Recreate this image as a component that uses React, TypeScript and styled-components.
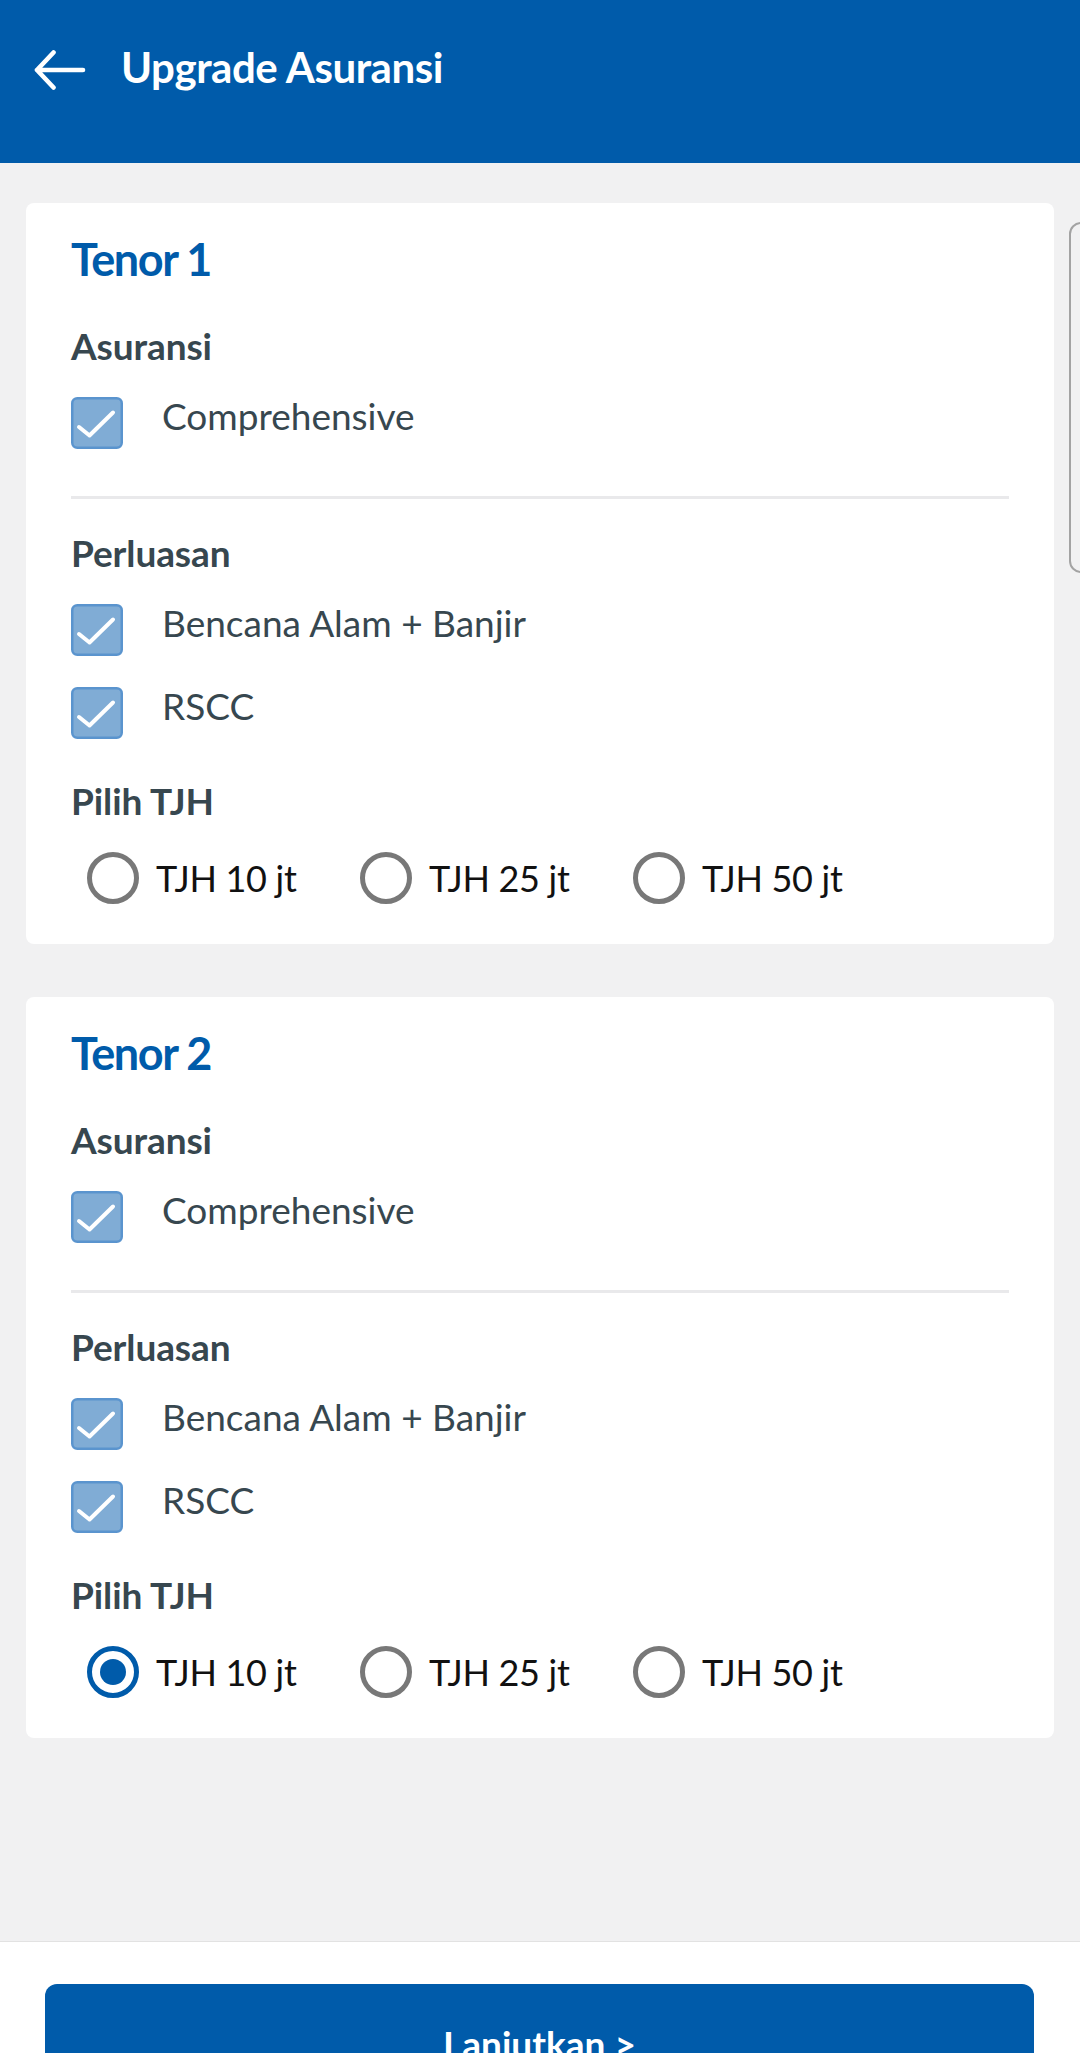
import React from "react";
import styled, { createGlobalStyle } from "styled-components";

const GlobalStyle = createGlobalStyle`
  html, body {
    margin: 0;
    padding: 0;
    background: #f1f1f2;
  }
  * { box-sizing: border-box; }
  body {
    font-family: Lato, "Noto Sans", "Liberation Sans", sans-serif;
  }
`;

const Screen = styled.div`
  position: relative;
  width: 1080px;
  height: 2053px;
  display: flex;
  flex-direction: column;
  overflow: hidden;
  background: #f1f1f2;
`;

const Header = styled.header`
  flex-shrink: 0;
  height: 163px;
  background: #005baa;
  display: flex;
  align-items: flex-start;
  padding: 45px 0 0 34px;
  gap: 35px;
`;

const BackButton = styled.button`
  margin-top: 4px;
  padding: 0;
  border: 0;
  background: transparent;
  width: 52px;
  height: 42px;
  display: flex;
  cursor: pointer;
`;

const HeaderTitle = styled.h1`
  margin: 0;
  color: #ffffff;
  font-size: 42px;
  line-height: 44px;
  font-weight: 700;
  letter-spacing: -0.45px;
`;

const Content = styled.main`
  flex: 1;
  display: flex;
  flex-direction: column;
  gap: 53px;
  padding: 40px 26px 0;
`;

const Card = styled.section`
  background: #ffffff;
  border-radius: 8px;
  padding: 28px 45px 40px;
  display: flex;
  flex-direction: column;
`;

const CardTitle = styled.h2`
  margin: 0;
  color: #005baa;
  font-size: 45px;
  line-height: 56px;
  font-weight: 700;
  letter-spacing: -1.4px;
`;

const SectionLabel = styled.h3<{ $top: number }>`
  margin: ${(p) => p.$top}px 0 29px;
  color: #37474f;
  font-size: 37px;
  line-height: 44px;
  font-weight: 700;
  letter-spacing: -0.1px;
`;

const CheckList = styled.div`
  display: flex;
  flex-direction: column;
  gap: 31px;
`;

const CheckRow = styled.label`
  display: flex;
  align-items: flex-start;
  gap: 39px;
  height: 52px;
`;

const CheckLabel = styled.span`
  color: #37474f;
  font-size: 37px;
  line-height: 38px;
  font-weight: 400;
`;

const Divider = styled.hr`
  margin: 47px 0 0;
  border: 0;
  height: 3px;
  background: #e9e9eb;
`;

const RadioGroup = styled.div`
  display: grid;
  grid-template-columns: repeat(3, 273px);
`;

const RadioItem = styled.label`
  display: flex;
  align-items: center;
  gap: 17px;
  padding-left: 16px;
  height: 52px;
`;

const RadioCircle = styled.span<{ $checked: boolean }>`
  flex-shrink: 0;
  width: 52px;
  height: 52px;
  border-radius: 50%;
  border: 5px solid ${(p) => (p.$checked ? "#005baa" : "#787878")};
  display: flex;
  align-items: center;
  justify-content: center;
  &::after {
    content: "";
    display: ${(p) => (p.$checked ? "block" : "none")};
    width: 26px;
    height: 26px;
    border-radius: 50%;
    background: #005baa;
  }
`;

const RadioLabel = styled.span`
  color: #111111;
  font-size: 36px;
  line-height: 48px;
  font-weight: 400;
  letter-spacing: -0.3px;
`;

const SideTab = styled.div`
  position: absolute;
  left: 1069px;
  top: 222px;
  width: 40px;
  height: 351px;
  border: 2px solid #a3a3a3;
  border-radius: 12px;
`;

const BottomBar = styled.footer`
  flex-shrink: 0;
  height: 112px;
  background: #ffffff;
  border-top: 1px solid #e2e2e2;
  padding: 42px 46px 0 45px;
  overflow: hidden;
`;

const PrimaryButton = styled.button`
  width: 100%;
  height: 124px;
  border: 0;
  border-radius: 12px;
  background: #005baa;
  color: #ffffff;
  font-family: Lato, "Noto Sans", sans-serif;
  font-size: 37px;
  font-weight: 700;
  line-height: 44px;
  padding: 38px 0 0;
  display: flex;
  align-items: flex-start;
  justify-content: center;
`;

const ArrowIcon = () => (
  <svg width="52" height="42" viewBox="0 0 52 42" fill="none">
    <path
      d="M49 21 H3 M3 21 L19.5 3.5 M3 21 L19.5 38.5"
      stroke="#ffffff"
      strokeWidth="4.6"
      strokeLinecap="round"
      strokeLinejoin="round"
    />
  </svg>
);

const CheckBoxIcon = () => (
  <svg width="52" height="52" viewBox="0 0 52 52" style={{ flexShrink: 0 }}>
    <rect x="1.25" y="1.25" width="49.5" height="49.5" rx="5" fill="#80acd5" stroke="#5a94ce" strokeWidth="2.5" />
    <path d="M8 30 L18.5 38.5 L42 15.5" fill="none" stroke="#ffffff" strokeWidth="4" strokeLinecap="round" strokeLinejoin="round" />
  </svg>
);

const Check = ({ label }: { label: string }) => (
  <CheckRow>
    <CheckBoxIcon />
    <CheckLabel>{label}</CheckLabel>
  </CheckRow>
);

const options = ["TJH 10 jt", "TJH 25 jt", "TJH 50 jt"];

const TenorCard = ({ n, selected }: { n: number; selected: number | null }) => (
  <Card>
    <CardTitle>Tenor {n}</CardTitle>
    <SectionLabel $top={37}>Asuransi</SectionLabel>
    <CheckList>
      <Check label="Comprehensive" />
    </CheckList>
    <Divider />
    <SectionLabel $top={32}>Perluasan</SectionLabel>
    <CheckList>
      <Check label="Bencana Alam + Banjir" />
      <Check label="RSCC" />
    </CheckList>
    <SectionLabel $top={40}>Pilih TJH</SectionLabel>
    <RadioGroup>
      {options.map((o, i) => (
        <RadioItem key={o}>
          <RadioCircle $checked={selected === i} />
          <RadioLabel>{o}</RadioLabel>
        </RadioItem>
      ))}
    </RadioGroup>
  </Card>
);

export default function App() {
  return (
    <>
      <GlobalStyle />
      <Screen>
        <Header>
          <BackButton aria-label="Kembali">
            <ArrowIcon />
          </BackButton>
          <HeaderTitle>Upgrade Asuransi</HeaderTitle>
        </Header>
        <Content>
          <TenorCard n={1} selected={null} />
          <TenorCard n={2} selected={0} />
        </Content>
        <BottomBar>
          <PrimaryButton>Lanjutkan &gt;</PrimaryButton>
        </BottomBar>
        <SideTab />
      </Screen>
    </>
  );
}
